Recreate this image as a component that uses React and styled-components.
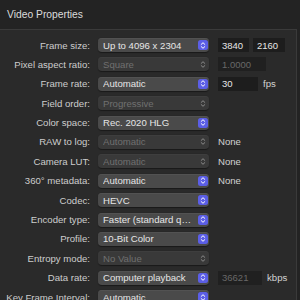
import React from "react";
import styled, { createGlobalStyle } from "styled-components";

const GlobalStyle = createGlobalStyle`
  html, body {
    margin: 0;
    padding: 0;
    background: #232323;
    width: 300px;
    height: 300px;
    overflow: hidden;
  }
  * { box-sizing: border-box; }
`;

const rows = [
  { label: "Frame size:", value: "Up to 4096 x 2304", extra: { kind: "pair", a: "3840", b: "2160" } },
  { label: "Pixel aspect ratio:", value: "Square", disabled: true, extra: { kind: "field", text: "1.0000", width: 48, disabled: true } },
  { label: "Frame rate:", value: "Automatic", extra: { kind: "field", text: "30", width: 40, unit: "fps" } },
  { label: "Field order:", value: "Progressive", disabled: true },
  { label: "Color space:", value: "Rec. 2020 HLG" },
  { label: "RAW to log:", value: "Automatic", disabled: true, extra: { kind: "text", text: "None" } },
  { label: "Camera LUT:", value: "Automatic", disabled: true, extra: { kind: "text", text: "None" } },
  { label: "360° metadata:", value: "Automatic", extra: { kind: "text", text: "None" } },
  { label: "Codec:", value: "HEVC" },
  { label: "Encoder type:", value: "Faster (standard quality)" },
  { label: "Profile:", value: "10-Bit Color" },
  { label: "Entropy mode:", value: "No Value", disabled: true },
  { label: "Data rate:", value: "Computer playback", extra: { kind: "field", text: "36621", width: 44, unit: "kbps", disabled: true } },
  { label: "Key Frame Interval:", value: "Automatic" },
];

const Chevrons = ({ color }) => (
  <svg width="10" height="9" viewBox="0 0 10 9">
    <path
      d="M3.2 3.4 L5 1.7 L6.8 3.4 M3.2 5.6 L5 7.3 L6.8 5.6"
      fill="none"
      stroke={color}
      strokeWidth="1"
      strokeLinecap="round"
      strokeLinejoin="round"
    />
  </svg>
);

export default function App() {
  return (
    <>
      <GlobalStyle />
      <Header>Video Properties</Header>
      <Panel>
        {rows.map((r) => (
          <Row key={r.label}>
            <Label>{r.label}</Label>
            <Popup $disabled={r.disabled}>
              <PopupText>{r.value}</PopupText>
              <Stepper $disabled={r.disabled}>
                <Chevrons color={r.disabled ? "#8a8a8a" : "#ffffff"} />
              </Stepper>
            </Popup>
            {r.extra && <Extra item={r.extra} />}
          </Row>
        ))}
      </Panel>
    </>
  );
}

function Extra({ item }) {
  if (item.kind === "pair") {
    return (
      <Extras>
        <Field $w={31}>{item.a}</Field>
        <Field $w={32}>{item.b}</Field>
      </Extras>
    );
  }
  if (item.kind === "text") {
    return (
      <Extras>
        <Note>{item.text}</Note>
      </Extras>
    );
  }
  return (
    <Extras>
      <Field $w={item.width} $disabled={item.disabled}>
        {item.text}
      </Field>
      {item.unit && <Note $unit>{item.unit}</Note>}
    </Extras>
  );
}

const Header = styled.div`
  height: 29px;
  display: flex;
  align-items: center;
  padding-left: 7px;
  font-family: "Liberation Sans", Arial, sans-serif;
  font-size: 10.3px;
  color: #dcdcdc;
`;

const Panel = styled.div`
  width: 297px;
  height: 271px;
  background: #2a2a2a;
  border-top: 1px solid #3a3a3a;
  border-right: 1px solid #3a3a3a;
  padding-top: 8px;
  display: flex;
  flex-direction: column;
  gap: 5.4px;
  font-family: "Liberation Sans", Arial, sans-serif;
  font-size: 9.6px;
`;

const Row = styled.div`
  display: grid;
  grid-template-columns: 90px 111px auto;
  column-gap: 8px;
  height: 14px;
  flex-shrink: 0;
  align-items: center;
`;

const Label = styled.div`
  text-align: right;
  color: #cdcdcd;
  white-space: nowrap;
`;

const Popup = styled.div`
  height: 14px;
  border-radius: 4px;
  background: ${(p) => (p.$disabled ? "#393939" : "#4a4a4a")};
  box-shadow: inset 0 0.5px 0 ${(p) => (p.$disabled ? "#444" : "#5a5a5a")},
    0 0.5px 1px rgba(0, 0, 0, 0.4);
  color: ${(p) => (p.$disabled ? "#707070" : "#e6e6e6")};
  display: flex;
  align-items: center;
  padding: 0 1px 0 5px;
  gap: 3px;
`;

const PopupText = styled.span`
  flex: 1;
  min-width: 0;
  overflow: hidden;
  white-space: nowrap;
  text-overflow: ellipsis;
`;

const Stepper = styled.span`
  width: 10px;
  height: 10px;
  border-radius: 2.5px;
  background: ${(p) => (p.$disabled ? "transparent" : "#5b5ee6")};
  display: flex;
  align-items: center;
  justify-content: center;
  flex-shrink: 0;
`;

const Extras = styled.div`
  display: flex;
  align-items: center;
  gap: 4px;
  margin-left: 1px;
`;

const Field = styled.div`
  width: ${(p) => p.$w}px;
  height: 14px;
  background: ${(p) => (p.$disabled ? "#202020" : "#1d1d1d")};
  color: ${(p) => (p.$disabled ? "#686868" : "#e6e6e6")};
  padding-left: 4px;
  display: flex;
  align-items: center;
  font-size: 9.5px;
`;

const Note = styled.span`
  color: #d2d2d2;
  margin-left: ${(p) => (p.$unit ? "1px" : "0")};
  font-size: 9.6px;
`;
